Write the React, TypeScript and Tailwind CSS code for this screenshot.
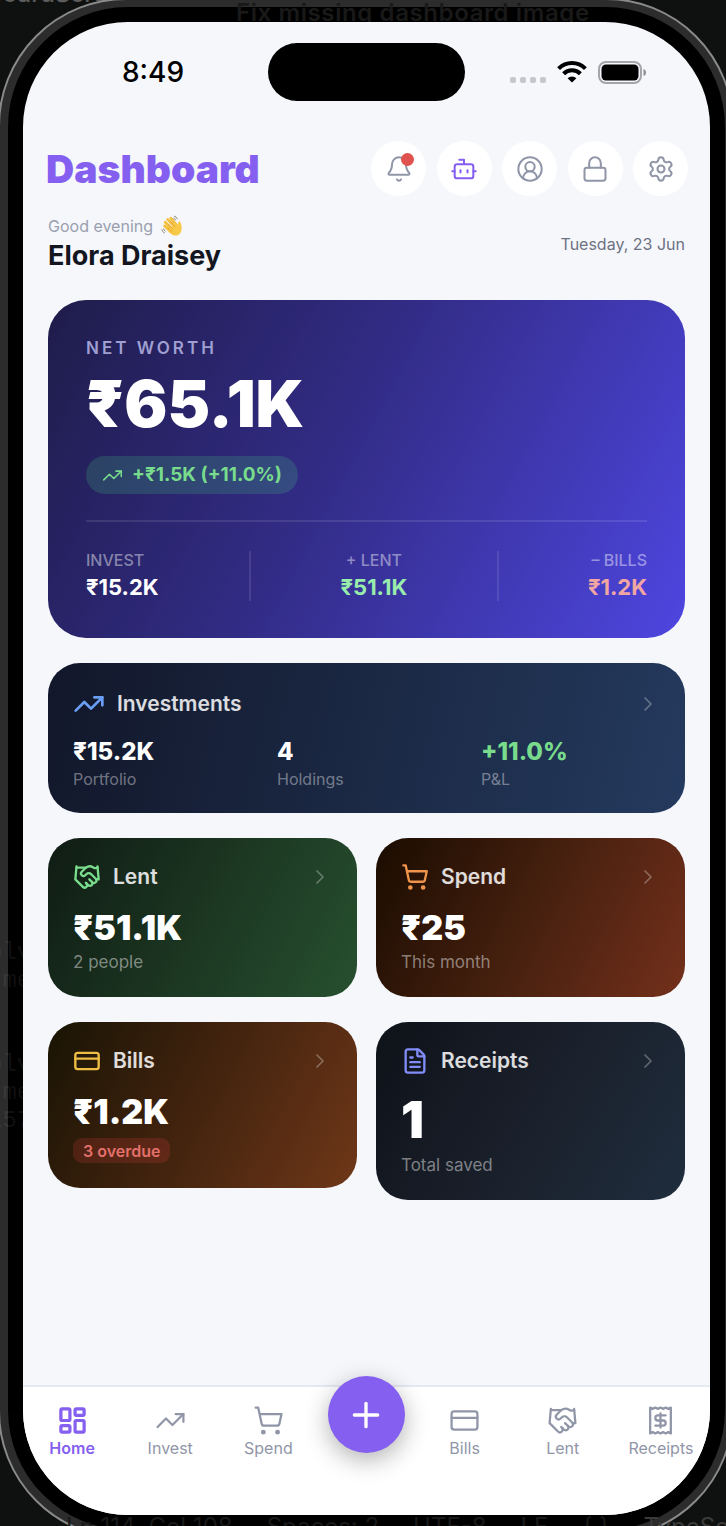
import React, { useState } from 'react';
import {
  Bell,
  Bot,
  ChevronRight,
  CircleUserRound,
  CreditCard,
  FileText,
  Handshake,
  LayoutDashboard,
  Lock,
  Plus,
  Receipt,
  Settings,
  ShoppingCart,
  TrendingUp,
  type LucideIcon,
} from 'lucide-react';

const headerActions: { label: string; icon: LucideIcon; color: string; badge?: boolean }[] = [
  { label: 'Notifications', icon: Bell, color: 'text-[#9096a8]', badge: true },
  { label: 'Assistant', icon: Bot, color: 'text-[#855ff0]' },
  { label: 'Profile', icon: CircleUserRound, color: 'text-[#9096a8]' },
  { label: 'Lock', icon: Lock, color: 'text-[#9096a8]' },
  { label: 'Settings', icon: Settings, color: 'text-[#9096a8]' },
];

const portfolio = [
  { value: '₹15.2K', label: 'Portfolio', color: 'text-white' },
  { value: '4', label: 'Holdings', color: 'text-white' },
  { value: '+11.0%', label: 'P&L', color: 'text-[#78dc8c]' },
];

const leftTabs: { label: string; icon: LucideIcon }[] = [
  { label: 'Home', icon: LayoutDashboard },
  { label: 'Invest', icon: TrendingUp },
  { label: 'Spend', icon: ShoppingCart },
];

const rightTabs: { label: string; icon: LucideIcon }[] = [
  { label: 'Bills', icon: CreditCard },
  { label: 'Lent', icon: Handshake },
  { label: 'Receipts', icon: Receipt },
];

function StatusBar() {
  return (
    <div className="grid grid-cols-3 items-center pt-[21px]">
      <span className="pl-[99px] text-[28px] leading-[34px] font-medium text-black">8:49</span>
      <div className="mx-auto h-[58px] w-[197px] rounded-full bg-black" />
      <div className="flex items-center justify-end pr-[63px]">
        <div className="mt-[15px] mr-[11px] flex gap-[4px]">
          {[0, 1, 2, 3].map((i) => (
            <span key={i} className="h-[6px] w-[6px] rounded-[2px] bg-[#c6c7cc]" />
          ))}
        </div>
        <svg width="30" height="22" viewBox="0 0 30 22" className="mr-[11px]" fill="none" stroke="black" strokeWidth="4">
          <path d="M1.6 7.6a19 19 0 0 1 26.8 0" />
          <path d="M6.6 12.8a12 12 0 0 1 16.8 0" />
          <path d="M15 21.5l-4.4-4.3a6.3 6.3 0 0 1 8.8 0z" fill="black" stroke="none" />
        </svg>
        <svg width="49" height="23" viewBox="0 0 49 23" fill="none">
          <rect x="1" y="1" width="42" height="21" rx="7" stroke="#a4a5a8" strokeWidth="2" />
          <rect x="3.5" y="3.5" width="37" height="16" rx="4.5" fill="black" />
          <path d="M45.5 8c3.4 1 3.4 6 0 7z" fill="#8d8e91" />
        </svg>
      </div>
    </div>
  );
}

function CardHeader({ icon: Icon, title, color, size = 28 }: { icon: LucideIcon; title: string; color: string; size?: number }) {
  return (
    <div className="flex h-[30px] items-center">
      <Icon size={size} strokeWidth={2} className={color} />
      <h2 className="ml-3 flex-1 text-[21px] font-semibold text-white/85">{title}</h2>
      <ChevronRight size={24} strokeWidth={1.75} className="text-white/30" />
    </div>
  );
}

function TabItem({ label, icon: Icon, active, onSelect }: { label: string; icon: LucideIcon; active: boolean; onSelect: () => void }) {
  return (
    <button
      type="button"
      onClick={onSelect}
      className={`flex flex-1 flex-col items-center gap-[2px] pt-[18px] ${active ? 'text-[#855ff0]' : 'text-[#9096a8]'}`}
    >
      <Icon size={31} strokeWidth={active ? 2.5 : 1.75} />
      <span className={`text-base leading-5 ${active ? 'font-semibold' : 'font-normal'}`}>{label}</span>
    </button>
  );
}

function WaveHand() {
  return (
    <svg width="22" height="22" viewBox="0 0 22 22" fill="none" strokeLinecap="round" aria-label="waving hand" role="img">
      <path d="M4.2 7.2l7 7M6.6 4.4l6.6 7M9.8 3.2l6 7.2M3.6 11l6 5.4" stroke="#f5bf3f" strokeWidth="2.8" />
      <path d="M18.6 6.4c1.6.6 2.4 5.4 2 8.2-.6 4.2-3.6 6.6-7 6-2.6-.5-5.2-3-7-5.2l8-7.4 2.6 1.8c-.2-1.6.2-3.7 1.4-3.4z" fill="#f8c847" />
      <path d="M7 9l5 5M9.4 6.4l4.8 5.2M7.6 13.6l3.4 3.2" stroke="#d9962c" strokeWidth=".6" />
      <path d="M13.4 1.2c1.4.4 2.2 1.2 2.8 2.6M12.8 3.2c.8.3 1.3.8 1.6 1.6M1 14.8c.3 1.5 1 2.3 2.4 3M2.6 14c.2.9.7 1.5 1.5 2" stroke="#7d7466" strokeWidth=".9" />
    </svg>
  );
}

// Faint editor text that shows through the bezel of the simulator
function Backdrop() {
  return (
    <div aria-hidden="true" className="pointer-events-none absolute inset-0 text-[#191919]">
      <span className="absolute -top-[10px] left-[228px] text-2xl font-semibold tracking-wide whitespace-nowrap">
        Fix missing dashboard image
      </span>
      <div className="absolute top-[932px] -left-[20px] font-['Liberation_Mono'] text-2xl leading-7 text-white/8">
        <p>olv</p>
        <p>-me</p>
      </div>
      <div className="absolute top-[1044px] -left-[20px] font-['Liberation_Mono'] text-2xl leading-7 text-white/8">
        <p>olv</p>
        <p>-me</p>
        <p>157</p>
      </div>
      <div className="absolute bottom-[-11px] left-[58px] flex gap-[34px] text-2xl leading-7 whitespace-pre">
        <span>Ln 114, Col 108</span>
        <span>Spaces: 2</span>
        <span>UTF-8</span>
        <span>LF</span>
        <span>{'{ }'}</span>
        <span className="text-[#3a3a3a]">TypeScript</span>
      </div>
    </div>
  );
}

function App() {
  const [tab, setTab] = useState('Home');

  return (
    <div className="relative flex min-h-screen flex-col overflow-hidden bg-[#0f1110] font-['Inter','Liberation_Sans',sans-serif]">
      <span aria-hidden="true" className="absolute -top-[22px] -left-[12px] text-2xl leading-8 font-medium text-[#5c5c5c]">
        boardScreen
      </span>

      {/* Device frame */}
      <div className="relative -mt-[2px] -mr-[8px] -mb-[13px] -ml-[2px] flex flex-1 flex-col rounded-[128px] border-2 border-[#8a8a8a] bg-[#2c2c2c] p-[7px] pl-[8px]">
        <div className="relative flex flex-1 flex-col rounded-[120px] bg-black p-[15px]">
          <Backdrop />

          <div className="relative flex flex-1 flex-col overflow-hidden rounded-[105px] bg-[#f5f7fb]">
            <StatusBar />

            {/* Header */}
            <header className="mt-10 flex items-center justify-between pr-[22px] pl-[23px]">
              <h1 className="text-[39px] leading-[48px] font-black text-[#855ff0]">Dashboard</h1>
              <div className="flex w-[317px] justify-between">
                {headerActions.map(({ label, icon: Icon, color, badge }) => (
                  <button
                    key={label}
                    type="button"
                    aria-label={label}
                    className="relative flex h-[55px] w-[55px] items-center justify-center rounded-full bg-white"
                  >
                    <Icon size={28} strokeWidth={1.75} className={color} />
                    {badge && <span className="absolute top-3 right-3 h-[13px] w-[13px] rounded-full bg-[#e0524d]" />}
                  </button>
                ))}
              </div>
            </header>

            <main className="flex flex-1 flex-col px-[25px] pt-[18px]">
              <div className="flex items-center justify-between">
                <div>
                  <p className="flex items-center gap-2 text-base leading-6 text-[#9a9fb0]">
                    Good evening <WaveHand />
                  </p>
                  <p className="text-[27px] leading-9 font-bold text-[#14161f]">Elora Draisey</p>
                </div>
                <time className="text-base text-[#6d7283]">Tuesday, 23 Jun</time>
              </div>

              {/* Net worth */}
              <section className="mt-[26px] rounded-[38px] bg-[linear-gradient(118deg,#1f1c4a_0%,#322c86_45%,#4e46e0_100%)] px-[38px] pt-9 pb-[35px]">
                <p className="text-[17px] leading-6 font-semibold tracking-[3px] text-[#a09fd2]">NET WORTH</p>
                <p className="mt-2 text-[64px] leading-[72px] font-black text-white">₹65.1K</p>
                <span className="mt-4 inline-flex h-[38px] items-center gap-[9px] rounded-full bg-[#4ade80]/18 px-4 text-[19px] font-bold text-[#78dc8c]">
                  <TrendingUp size={21} strokeWidth={1.75} />
                  +₹1.5K (+11.0%)
                </span>
                <div className="mt-[26px] flex items-center border-t-2 border-white/10 pt-[27px]">
                  <div className="flex-[1.1]">
                    <p className="text-base leading-[22px] font-medium text-white/45">INVEST</p>
                    <p className="text-[22px] leading-8 font-bold text-white">₹15.2K</p>
                  </div>
                  <div className="h-[50px] w-[2px] bg-white/10" />
                  <div className="flex-[1.66] text-center">
                    <p className="text-base leading-[22px] font-medium text-white/45">+ LENT</p>
                    <p className="text-[22px] leading-8 font-bold text-[#98ecac]">₹51.1K</p>
                  </div>
                  <div className="h-[50px] w-[2px] bg-white/10" />
                  <div className="flex-1 text-right">
                    <p className="text-base leading-[22px] font-medium text-white/45">– BILLS</p>
                    <p className="text-[22px] leading-8 font-bold text-[#f2a6a4]">₹1.2K</p>
                  </div>
                </div>
              </section>

              {/* Investments */}
              <section className="mt-[25px] rounded-[32px] bg-[linear-gradient(103deg,#12172a,#243a5e)] px-[25px] pt-[26px] pb-[22px]">
                <CardHeader icon={TrendingUp} title="Investments" color="text-[#6a9ff5]" size={32} />
                <div className="mt-[18px] grid grid-cols-3 gap-[25px]">
                  {portfolio.map((item) => (
                    <div key={item.label}>
                      <p className={`text-2xl leading-[30px] font-extrabold ${item.color}`}>{item.value}</p>
                      <p className="text-base leading-6 text-white/40">{item.label}</p>
                    </div>
                  ))}
                </div>
              </section>

              <div className="mt-[25px] grid grid-cols-2 items-start gap-x-[19px] gap-y-[25px]">
                <section className="rounded-[32px] bg-[linear-gradient(117deg,#101c14,#27502f)] px-[25px] pt-6 pb-[23px]">
                  <CardHeader icon={Handshake} title="Lent" color="text-[#78dc8c]" />
                  <p className="mt-4 text-[34px] leading-10 font-black text-white">₹51.1K</p>
                  <p className="mt-[2px] text-[17px] leading-6 text-white/45">2 people</p>
                </section>

                <section className="rounded-[32px] bg-[linear-gradient(117deg,#1a0c00,#46200f_50%,#73301b)] px-[25px] pt-6 pb-[23px]">
                  <CardHeader icon={ShoppingCart} title="Spend" color="text-[#f0944c]" />
                  <p className="mt-4 text-[34px] leading-10 font-black text-white">₹25</p>
                  <p className="mt-[2px] text-[17px] leading-6 text-white/45">This month</p>
                </section>

                <section className="rounded-[32px] bg-[linear-gradient(118deg,#191404,#44240f_50%,#6f3718)] px-[25px] pt-6 pb-[25px]">
                  <CardHeader icon={CreditCard} title="Bills" color="text-[#efbe45]" />
                  <p className="mt-4 text-[34px] leading-10 font-black text-white">₹1.2K</p>
                  <span className="mt-[6px] flex h-[25px] w-fit items-center rounded-[9px] bg-[#ef4444]/18 px-[10px] text-base font-semibold text-[#e3706b]">
                    3 overdue
                  </span>
                </section>

                <section className="rounded-[32px] bg-[linear-gradient(120deg,#0e1219,#1a202b_50%,#1f2d3d)] px-[25px] pt-6 pb-[23px]">
                  <CardHeader icon={FileText} title="Receipts" color="text-[#818cf8]" />
                  <p className="mt-[14px] text-[51px] leading-[60px] font-black text-white">1</p>
                  <p className="mt-[3px] text-[17px] leading-6 text-white/45">Total saved</p>
                </section>
              </div>
            </main>

            {/* Tab bar */}
            <nav className="flex h-[130px] items-start border-t-2 border-[#e7e9f2] bg-white">
              {leftTabs.map((item) => (
                <TabItem key={item.label} {...item} active={tab === item.label} onSelect={() => setTab(item.label)} />
              ))}
              <div className="flex flex-1 justify-center">
                <button
                  type="button"
                  aria-label="Add"
                  className="-mt-[11px] flex h-[77px] w-[77px] shrink-0 items-center justify-center rounded-full bg-[#855ff0] text-white shadow-[0_7px_24px_rgba(0,0,0,0.3)]"
                >
                  <Plus size={40} strokeWidth={2} />
                </button>
              </div>
              {rightTabs.map((item) => (
                <TabItem key={item.label} {...item} active={tab === item.label} onSelect={() => setTab(item.label)} />
              ))}
            </nav>
          </div>
        </div>
      </div>
    </div>
  );
}

export default App;
